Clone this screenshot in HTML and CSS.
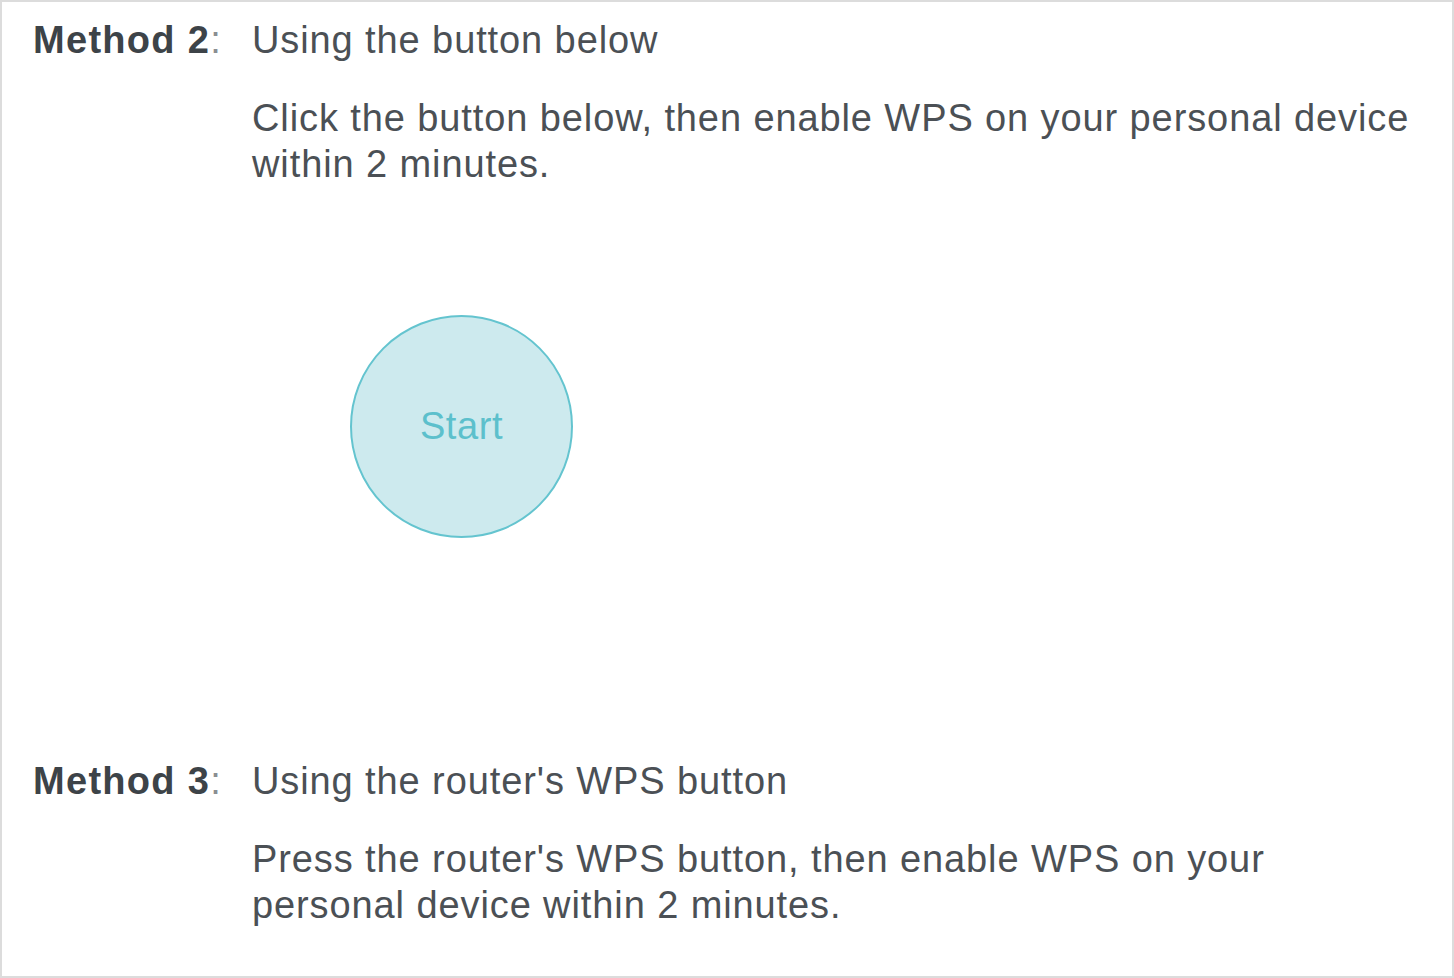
FILE: index.html
```html
<!DOCTYPE html>
<html lang="en">
<head>
<meta charset="UTF-8" />
<meta name="viewport" content="width=device-width, initial-scale=1" />
<title>WPS</title>
<link rel="stylesheet" href="styles.css">
</head>
<body>
  <div class="panel">
    <div class="method">
      <div class="method-label"><b>Method 2</b>:</div>
      <div class="method-body">
        <div class="method-title">Using the button below</div>
        <p class="method-desc">Click the button below, then enable WPS on your personal device within 2 minutes.</p>
        <button type="button" class="start-btn" id="startBtn">Start</button>
      </div>
    </div>

    <div class="method method-last">
      <div class="method-label"><b>Method 3</b>:</div>
      <div class="method-body">
        <div class="method-title">Using the router's WPS button</div>
        <p class="method-desc">Press the router's WPS button, then enable WPS on your personal device within 2 minutes.</p>
      </div>
    </div>
  </div>
</body>
</html>
```

FILE: styles.css
```css
html, body {
  margin: 0; height: 100%;
}
body {
  font-family: "Liberation Sans", Arial, sans-serif;
  font-size: 38px; line-height: 46px; letter-spacing: 0.9px;
  color: #4b5055; background: #fff;
}
.panel {
  box-sizing: border-box; height: 100vh;
  border: 2px solid #dcdcdc;
  padding: 15px 31px 0;
}
.method {
  display: flex;
}
.method-last {
  margin-top: 220px;
}
.method-label {
  width: 219px; flex: none;
  color: #8a8e92;
}
.method-label b {
  color: #3d4348; letter-spacing: 1.3px;
}
.method-body {
  flex: 1;
}
.method-desc {
  margin: 32px 0 0; max-width: 1166px;
}
.start-btn {
  display: block; box-sizing: border-box;
  width: 223px; height: 223px; border-radius: 50%;
  margin: 128px 0 0 98px; padding: 0;
  background: #cdeaee; border: 2px solid #64c4cf;
  font-family: inherit; font-size: 38px; letter-spacing: 0.6px;
  color: #5cc0cc; cursor: pointer;
}
```
